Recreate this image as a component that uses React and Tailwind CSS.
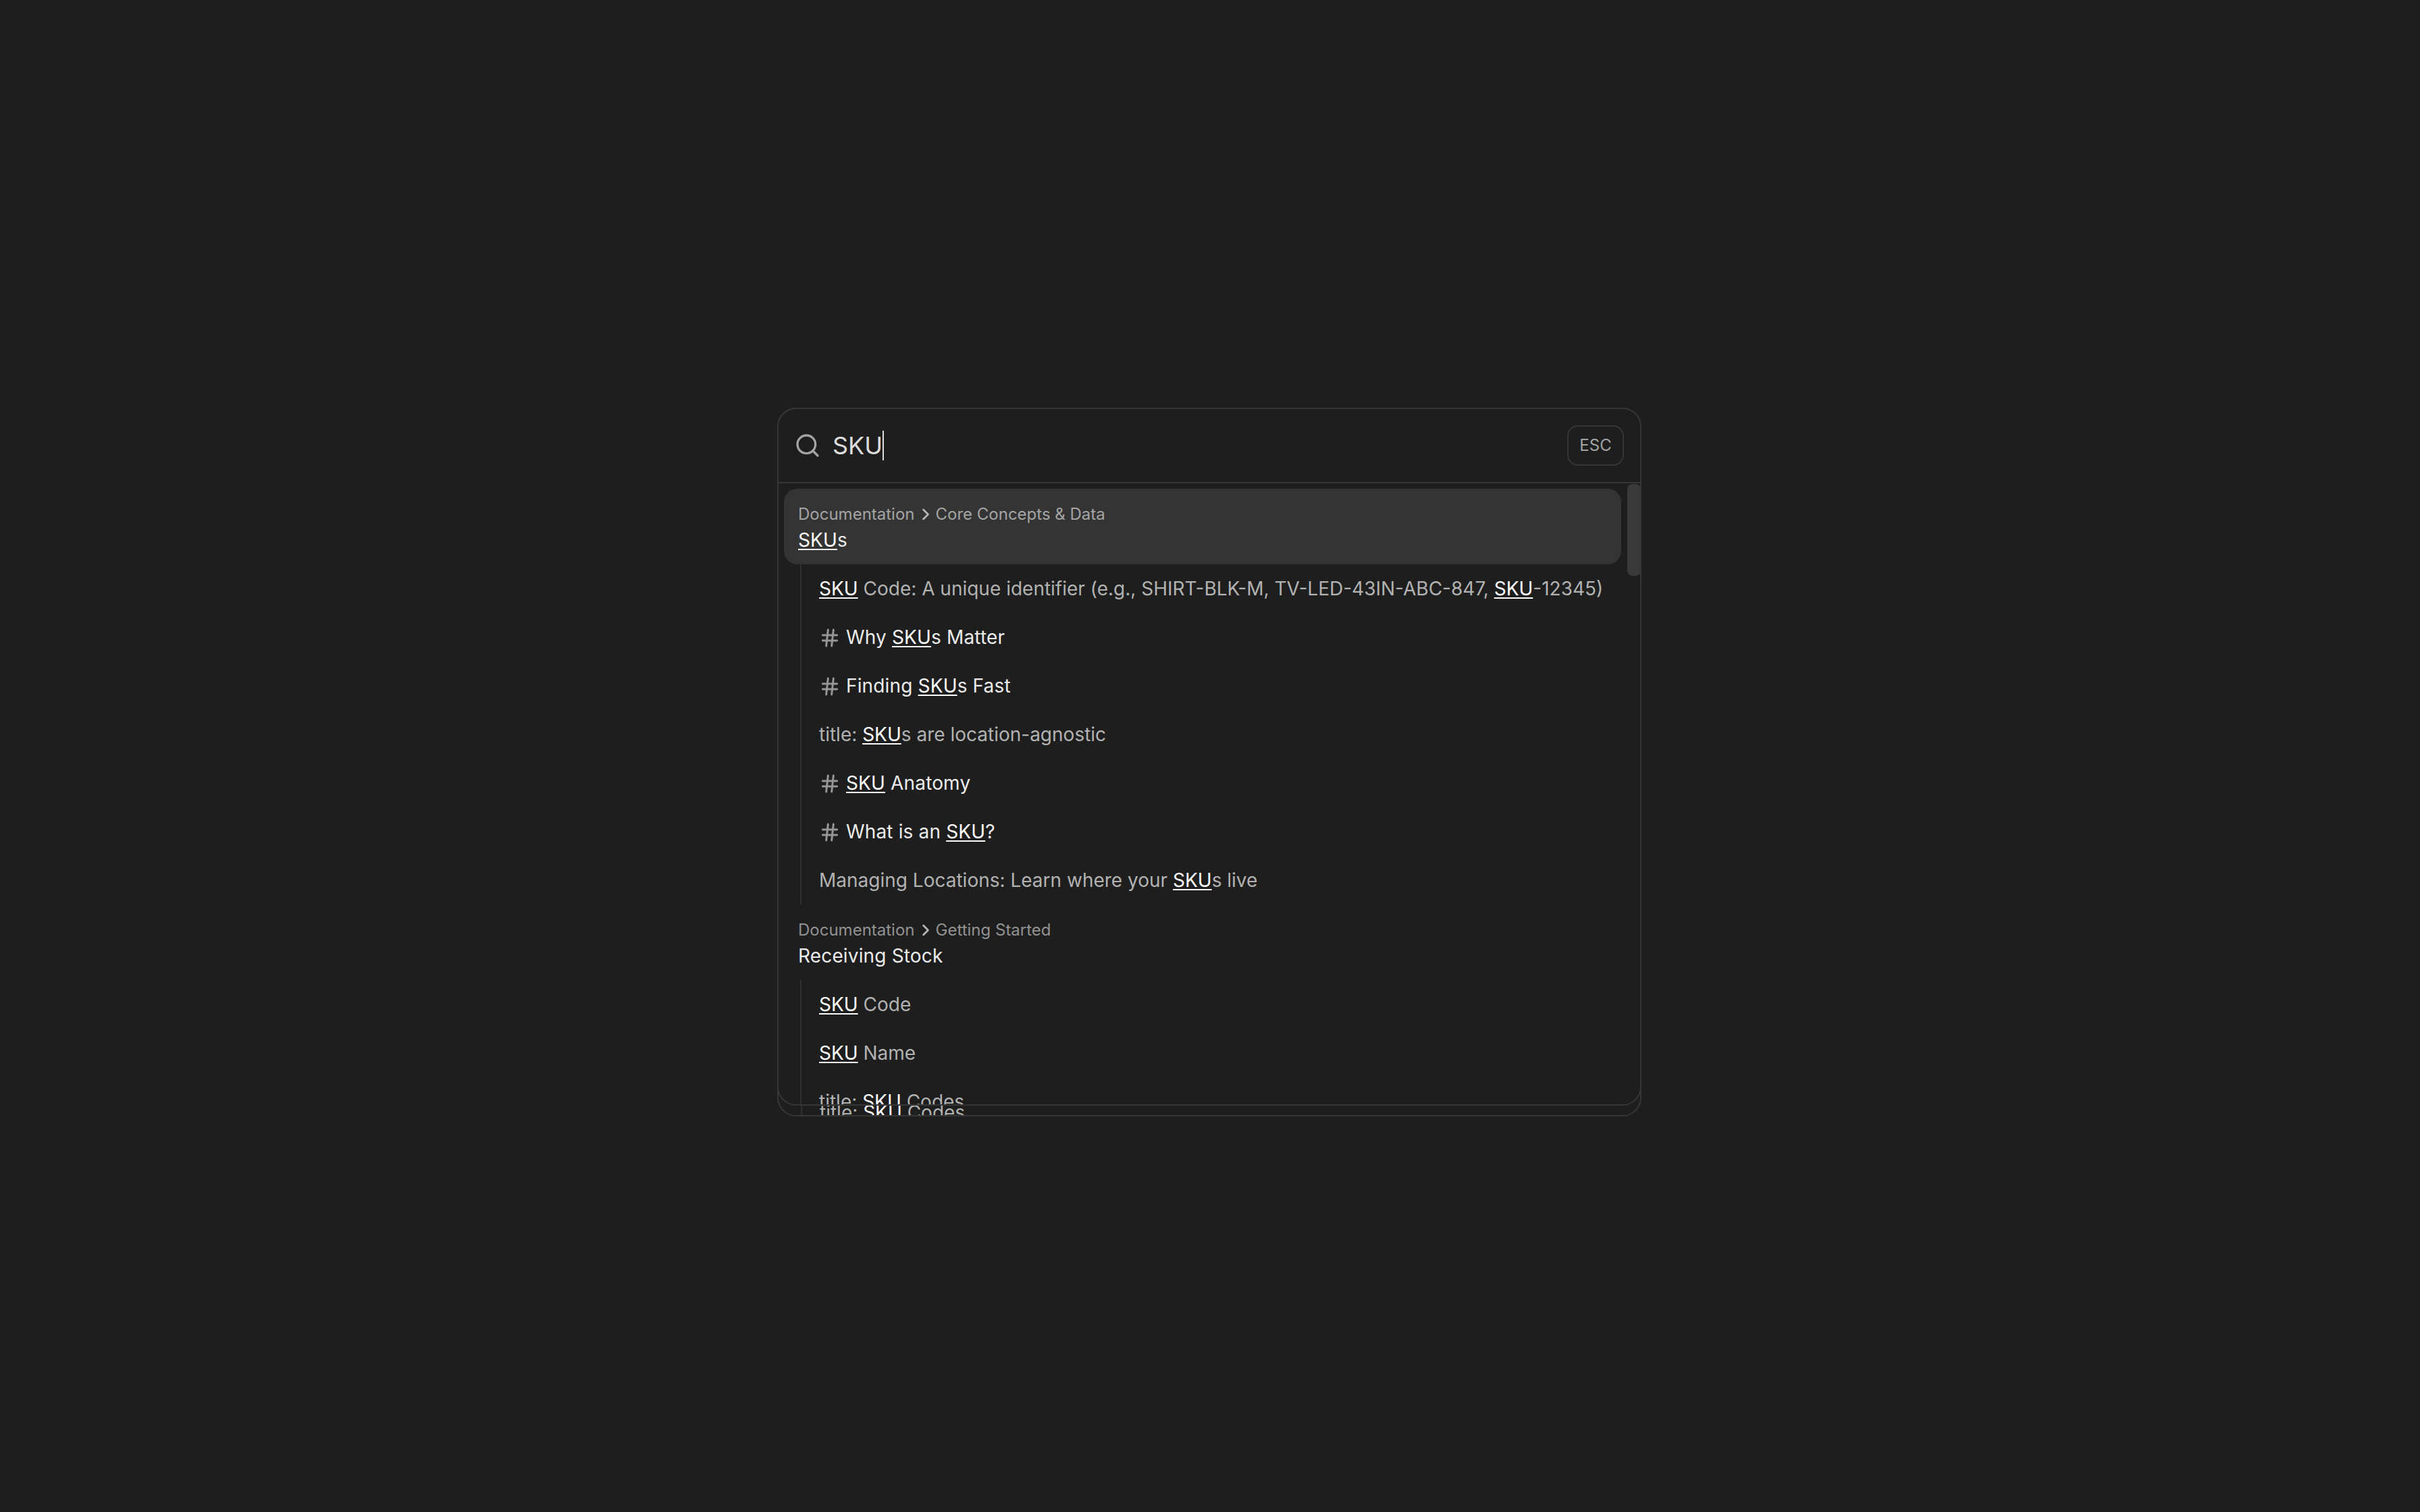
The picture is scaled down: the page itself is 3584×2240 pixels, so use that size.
import { Search, ChevronRight, Hash } from "lucide-react";

const GROUPS = [
  {
    crumbs: ["Documentation", "Core Concepts & Data"],
    title: "[SKU]s",
    active: true,
    rows: [
      { text: "[SKU] Code: A unique identifier (e.g., SHIRT-BLK-M, TV-LED-43IN-ABC-847, [SKU]-12345)" },
      { text: "Why [SKU]s Matter", heading: true },
      { text: "Finding [SKU]s Fast", heading: true },
      { text: "title: [SKU]s are location-agnostic" },
      { text: "[SKU] Anatomy", heading: true },
      { text: "What is an [SKU]?", heading: true },
      { text: "Managing Locations: Learn where your [SKU]s live" },
    ],
  },
  {
    crumbs: ["Documentation", "Getting Started"],
    title: "Receiving Stock",
    rows: [
      { text: "[SKU] Code" },
      { text: "[SKU] Name" },
      { text: "title: [SKU] Codes" },
      { text: "[SKU] Format" },
    ],
  },
];

// "[SKU]" marks the matched part of a result
function Marked({ text }) {
  return text.split(/(\[[^\]]+\])/).map((part, i) =>
    part.startsWith("[") ? (
      <span key={i} className="text-white underline decoration-2 underline-offset-[3px]">{part.slice(1, -1)}</span>
    ) : (
      <span key={i}>{part}</span>
    )
  );
}

function Row({ text, heading }) {
  return (
    <div className={`flex items-center h-[72px] pl-[26px] whitespace-pre ${heading ? "text-[#ececec] tracking-[0.15px]" : "text-[#b2b2b2]"}`}>
      {heading && <Hash size={32} strokeWidth={2.2} className="text-[#969696] mr-[8px] shrink-0 translate-y-[1px]" />}
      <span><Marked text={text} /></span>
    </div>
  );
}

function Group({ group }) {
  return (
    <div>
      <div className={`h-[112px] pl-[21px] pt-[24px] rounded-[20px] ${group.active ? "bg-[#343434]" : ""}`}>
        <div className={`flex items-center h-[28px] text-[24px] leading-[28px] ${group.active ? "text-[#a4a4a4]" : "text-[#929292]"}`}>
          {group.crumbs[0]}
          <ChevronRight size={28} strokeWidth={2.2} className="ml-[2px] mr-[1px] text-[#b8b8b8]" />
          {group.crumbs[1]}
        </div>
        <div className="mt-[6px] h-[36px] leading-[36px] text-[#ececec] tracking-[0.15px] whitespace-pre"><Marked text={group.title} /></div>
      </div>
      <div className="ml-[24px] border-l-2 border-[#303030]">
        {group.rows.map((row, i) => <Row key={i} {...row} />)}
      </div>
    </div>
  );
}

export default function App() {
  return (
    <div className="min-h-screen bg-[#1e1e1e] pt-[604px] pr-[2px] font-[Inter,sans-serif] text-[28px] leading-[36px]">
      <div className="relative mx-auto w-[1280px] h-[1050px] border-2 border-[#363636] rounded-[28px]">
        {/* second layer peeking out under the panel */}
        <div className="absolute left-0 right-0 bottom-0 h-[16px] overflow-hidden">
          <div className="-mt-[24px] ml-[33px] border-l-2 border-[#303030] pl-[26px] h-[72px] flex items-center text-[#b2b2b2] whitespace-pre">
            <span><Marked text="title: [SKU] Codes" /></span>
          </div>
        </div>

        <div className="relative -m-[2px] h-[1034px] bg-[#1e1e1e] border-2 border-[#363636] rounded-[28px] overflow-hidden">
          <div className="flex items-center h-[110px] pl-[23px] pr-[24px] border-b-2 border-[#363636]">
            <Search size={40} className="text-[#a4a4a4] shrink-0" />
            <div className="ml-[17px] flex-1 flex items-center text-[36px] leading-[44px] text-[#dcdcdc]">
              SKU
              <span className="w-[2px] h-[44px] bg-[#dcdcdc]" />
            </div>
            <div className="flex items-center justify-center w-[84px] h-[60px] border-2 border-[#363636] rounded-[16px] text-[24px] text-[#a4a4a4]">ESC</div>
          </div>

          <div className="pt-[8px] pl-[8px] w-[1248px]">
            {GROUPS.map((g, i) => <Group key={i} group={g} />)}
          </div>

          <div className="absolute top-[111px] left-[1257px] w-[20px] h-[136px] rounded-[8px] bg-[#3a3a3a]" />
        </div>
      </div>
    </div>
  );
}
